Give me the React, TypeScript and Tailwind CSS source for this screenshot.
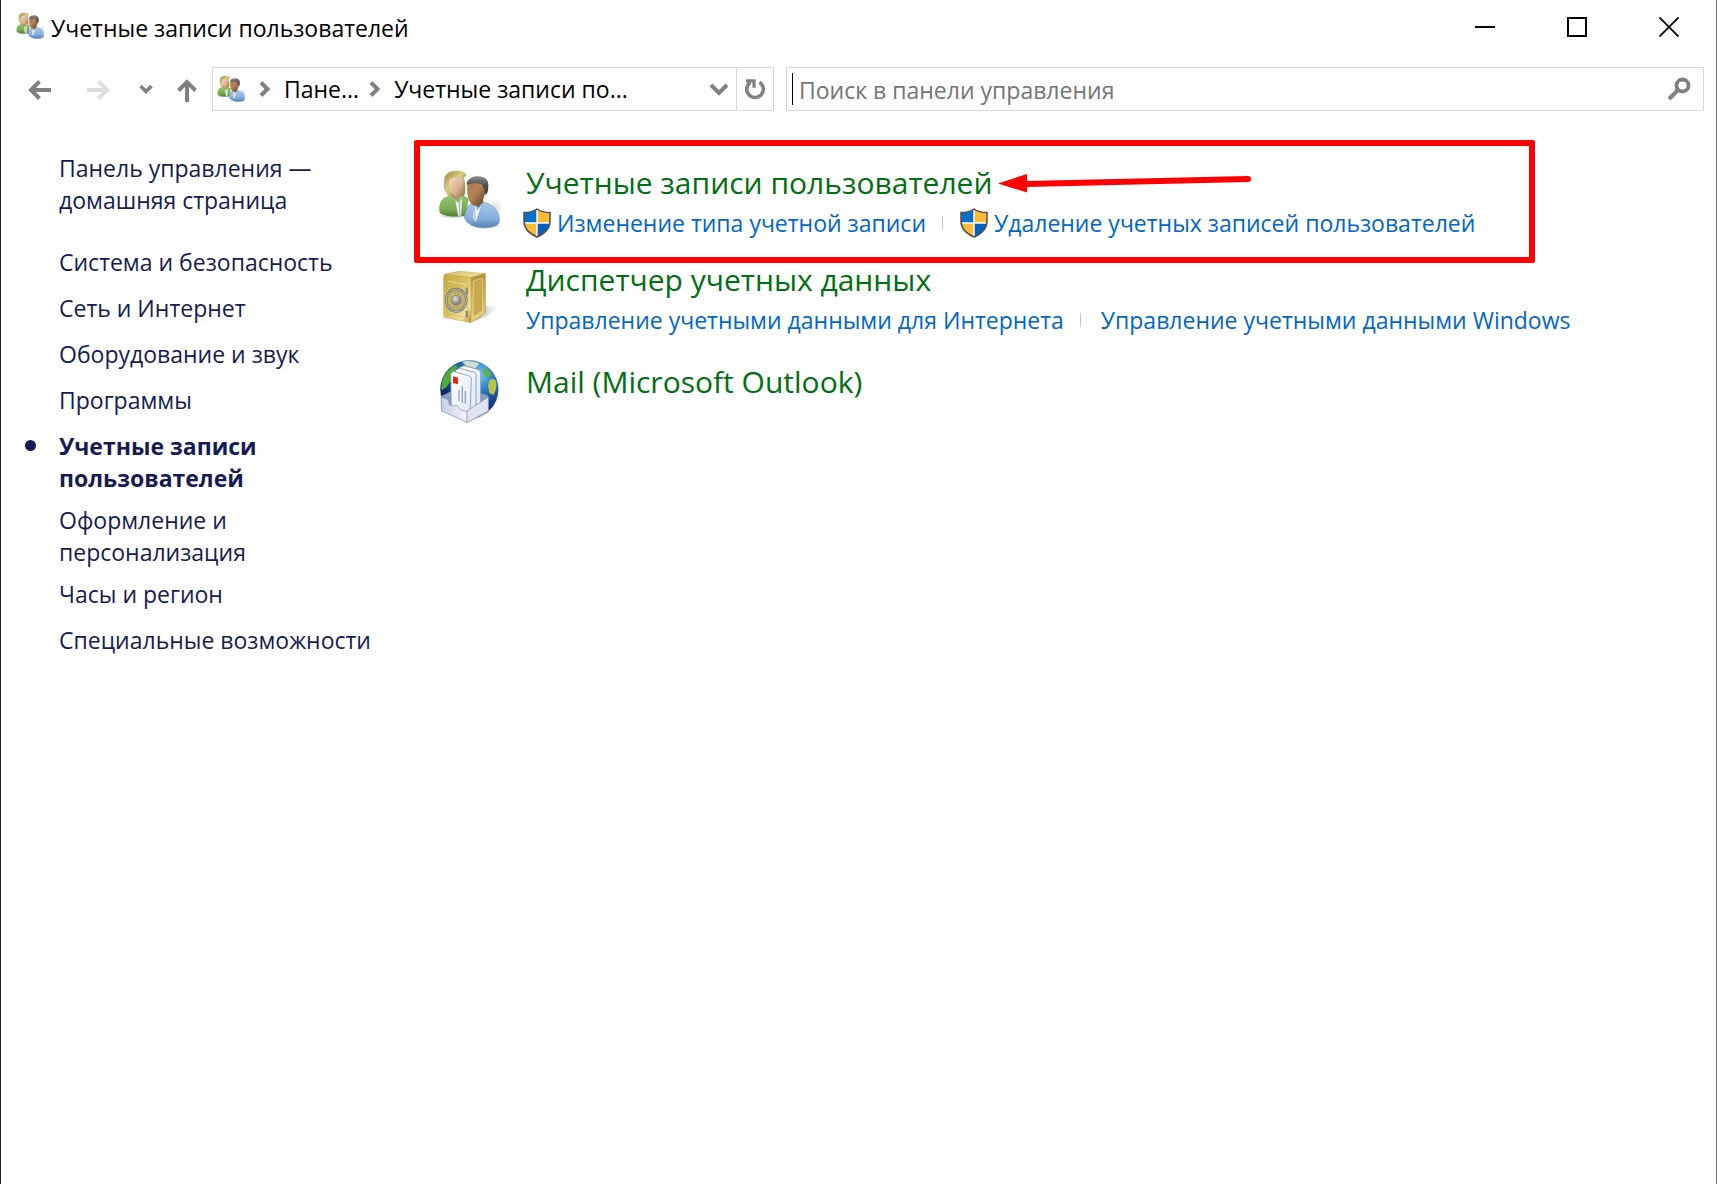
import { useId, type ReactNode } from "react";

function UsersIcon({ className }: { className: string }) {
  const id = useId().replace(/[^a-zA-Z0-9]/g, "");
  const u = (n: string) => `url(#${id}${n})`;
  return (
    <svg viewBox="24 28 192 192" className={className} aria-hidden="true">
      <defs>
        <linearGradient id={`${id}hair`} x1="0" y1="0" x2="1" y2="1">
          <stop offset="0" stopColor="#9c8a3c" />
          <stop offset=".45" stopColor="#d9ca84" />
          <stop offset="1" stopColor="#8c7432" />
        </linearGradient>
        <linearGradient id={`${id}f1`} x1="0" y1="0" x2="1" y2="1">
          <stop offset="0" stopColor="#f6dcc4" />
          <stop offset=".6" stopColor="#dcb393" />
          <stop offset="1" stopColor="#9a7358" />
        </linearGradient>
        <linearGradient id={`${id}f2`} x1="0" y1="0" x2="1" y2="1">
          <stop offset="0" stopColor="#a9784f" />
          <stop offset=".45" stopColor="#b38258" />
          <stop offset="1" stopColor="#5d3d24" />
        </linearGradient>
        <linearGradient id={`${id}g`} x1="0" y1="0" x2="0" y2="1">
          <stop offset="0" stopColor="#99c170" />
          <stop offset=".65" stopColor="#79ab50" />
          <stop offset="1" stopColor="#4f7d33" />
        </linearGradient>
        <linearGradient id={`${id}b`} x1="0" y1="0" x2="0" y2="1">
          <stop offset="0" stopColor="#a9c9ea" />
          <stop offset=".65" stopColor="#85b0de" />
          <stop offset="1" stopColor="#5381b5" />
        </linearGradient>
        <linearGradient id={`${id}k`} x1="0" y1="0" x2="0" y2="1">
          <stop offset="0" stopColor="#8d8d8d" />
          <stop offset=".5" stopColor="#4e4e4e" />
          <stop offset="1" stopColor="#3a332e" />
        </linearGradient>
        <radialGradient id={`${id}s`}>
          <stop offset="0" stopColor="#000" stopOpacity=".35" />
          <stop offset="1" stopColor="#000" stopOpacity="0" />
        </radialGradient>
      </defs>
      <ellipse cx="164" cy="198" rx="52" ry="11" fill={u("s")} />
      <ellipse cx="196" cy="148" rx="22" ry="34" fill={u("s")} opacity=".4" />
      <ellipse cx="68" cy="168" rx="46" ry="8" fill={u("s")} />
      <path d="M42 66C42 42 58 32 82 33c18 0 27 7 28 14l-8 8c4 16 6 34 2 50-4 6-10 7-16 5l-30 2C44 98 40 84 42 66Z" fill={u("hair")} />
      <path d="M66 90h26v30l-12 12-16-14Z" fill="#b98f70" />
      <path d="M28 142c2-18 10-30 32-34l20 12 16-12c8 0 16 4 20 10l-8 50c-24 4-54 4-76-6-4-4-5-12-4-20Z" fill={u("g")} />
      <path d="m76 122 10 8 10-14-2 52H84Z" fill="#e7eee9" />
      <path d="m88 128 2 40" stroke="#9eafab" strokeWidth="3" />
      <path d="M56 64c0-8 24-12 34-14 10 2 11 14 10 28-1 18-8 30-18 32-14 0-25-16-26-46Z" fill={u("f1")} />
      <path d="M46 62c2-18 16-26 34-26 14 0 24 4 28 10-14 6-36 2-50 16-4 8-4 22-2 34-8-8-12-20-10-34Z" fill={u("hair")} />
      <path d="M122 108h36l2 24-20 22-16-16Z" fill="#805634" />
      <path d="M103 174c2-22 10-38 28-46l14 16 14-17c30 6 46 24 49 48 1 12 0 17-8 22-22 10-64 10-84-6-6-4-10-10-13-17Z" fill={u("b")} stroke="#5e88b5" strokeWidth="1.5" />
      <path d="m132 132 10 22 16-24-20 58-8-12Z" fill="#f2f6fa" />
      <path d="m132 132 4 50M158 130l-20 58" stroke="#6f96c0" strokeWidth="2" fill="none" />
      <path d="M112 76c4-12 46-14 54-8 4 24-2 56-20 68-10 4-18 2-24-6-9-12-12-32-10-54Z" fill={u("f2")} />
      <path d="M110 72c2-14 16-22 34-22 22 0 32 12 31 28 0 14-2 22-8 28-3-14-5-24-13-33-14-4-26-2-43 2-1 0-2-1-1-3Z" fill={u("k")} />
    </svg>
  );
}

function SafeIcon() {
  return (
    <svg viewBox="24 28 192 192" className="size-16" aria-hidden="true">
      <defs>
        <linearGradient id="safe-front" x1="0" y1="0" x2="1" y2="1">
          <stop offset="0" stopColor="#c7a63a" />
          <stop offset=".5" stopColor="#dcc468" />
          <stop offset=".8" stopColor="#f0e29c" />
          <stop offset="1" stopColor="#b28e2a" />
        </linearGradient>
        <linearGradient id="safe-side" x1="0" y1="0" x2="0" y2="1">
          <stop offset="0" stopColor="#b3913c" />
          <stop offset=".6" stopColor="#d9be66" />
          <stop offset="1" stopColor="#ecd98e" />
        </linearGradient>
        <linearGradient id="safe-top" x1="0" y1="0" x2="1" y2="0">
          <stop offset="0" stopColor="#d9c26a" />
          <stop offset="1" stopColor="#f0df9c" />
        </linearGradient>
        <linearGradient id="safe-shadow" x1="0" y1="0" x2="1" y2="0">
          <stop offset="0" stopColor="#000" stopOpacity=".3" />
          <stop offset="1" stopColor="#000" stopOpacity="0" />
        </linearGradient>
        <radialGradient id="safe-hub" cx=".4" cy=".35">
          <stop offset="0" stopColor="#e3e3e3" />
          <stop offset="1" stopColor="#858585" />
        </radialGradient>
      </defs>
      <path d="m124 188 40-50 42 4-36 28Z" fill="url(#safe-shadow)" />
      <path d="m42 44 46-9 78 7-44 12Z" fill="url(#safe-top)" stroke="#c9b064" strokeWidth="2" />
      <path d="m122 54 44-12v118l-44 29Z" fill="url(#safe-side)" stroke="#b39444" strokeWidth="2" />
      <path d="m130 64 28-9v98l-28 18Z" fill="#c9a94c" stroke="#e8d590" strokeWidth="2" />
      <path d="M46 45l72 8q5 1 5 5v126q0 5-5 4l-72-14q-5-1-5-5V49q0-4 5-4Z" fill="url(#safe-front)" stroke="#c0a044" strokeWidth="1.5" />
      <path d="m51 62 62 11v101l-62-11Z" fill="none" stroke="#c8aa4e" strokeWidth="1.5" />
      <path d="m52 64 60 11" stroke="#f2e7ac" strokeWidth="2" />
      <rect x="107" y="84" width="7" height="20" rx="2" fill="#8f8b7c" />
      <rect x="107" y="153" width="7" height="20" rx="2" fill="#8f8b7c" />
      <ellipse cx="79" cy="122" rx="30" ry="34" fill="#cdb153" stroke="#6f6f6d" strokeWidth="7" />
      <ellipse cx="79" cy="122" rx="30" ry="34" fill="none" stroke="#c4c4c2" strokeWidth="3" />
      <path d="m52 106 54 32M54 140l50-36M72 90l14 64M90 91l-22 62" stroke="#a3a39e" strokeWidth="4" />
      <circle cx="79" cy="122" r="15" fill="url(#safe-hub)" stroke="#8c8c8a" strokeWidth="2" />
    </svg>
  );
}

function MailIcon() {
  return (
    <svg viewBox="24 28 192 192" className="size-16" aria-hidden="true">
      <defs>
        <radialGradient id="globe" cx=".65" cy=".25" r=".7">
          <stop offset="0" stopColor="#7fd0ee" />
          <stop offset=".35" stopColor="#2f83cc" />
          <stop offset=".9" stopColor="#10276f" />
        </radialGradient>
        <linearGradient id="paper" x1="0" y1="0" x2="1" y2="1">
          <stop offset="0" stopColor="#fff" />
          <stop offset="1" stopColor="#dfe7f4" />
        </linearGradient>
        <linearGradient id="tray" x1="0" y1="0" x2="1" y2="0">
          <stop offset="0" stopColor="#c5cfe2" />
          <stop offset="1" stopColor="#f4f7fc" />
        </linearGradient>
      </defs>
      <circle cx="119" cy="120" r="90" fill="#d5d8de" opacity=".5" />
      <circle cx="118" cy="119" r="87" fill="url(#globe)" />
      <path d="M36 96c6-22 22-40 40-50l8 4-10 14-8 10-6 22-10 16-14 10c-3-8-2-16 0-26Z" fill="#4cae35" />
      <path d="M96 36c20-4 38-2 52 6l-12 14-26-6Z" fill="#cfdccb" />
      <path d="m160 56 12 2 12 16-6 10-12-4-6-12Z" fill="#5fae46" />
      <path d="M178 92c6-6 16-6 20 2 4 14-1 32-8 42l-12-6-4-22Z" fill="#b8c244" />
      <path d="m33 140 60-30 82 28v50l-62 30-78-34Z" fill="#8c9cbc" />
      <path d="m88 54 14-6 46 12 4 8v100l-64-20Z" fill="url(#paper)" stroke="#8394b2" strokeWidth="2.5" />
      <path d="m76 62 12-6 46 12 4 6v108l-62-20Z" fill="url(#paper)" stroke="#8394b2" strokeWidth="2.5" />
      <path d="m62 72 8-7 48 14 6 6-4 116-56-22Z" fill="url(#paper)" stroke="#8394b2" strokeWidth="2.5" />
      <path d="m69 80 15 4v20l-15-4Z" fill="#e2290f" />
      <path d="M87 122v32M97 110v50M106 124v38" stroke="#8fa5c8" strokeWidth="4" />
      <path d="m33 142 22 8 4 16 10 4 6-4 8 2 8 12 20 6v32l-76-34Z" fill="url(#tray)" stroke="#8291b0" strokeWidth="2" />
      <path d="m111 184 64-42v42l-64 35Z" fill="#dfe6f2" stroke="#8291b0" strokeWidth="2" />
    </svg>
  );
}

function ShieldIcon() {
  return (
    <svg viewBox="0 0 28 30" className="h-[30px] w-7 shrink-0" aria-hidden="true">
      <defs>
        <clipPath id="shield-clip">
          <path d="M14 1c4 3 8 3.500 13 3.500V13c0 8-6 13-13 16C7 26 1 21 1 13V4.500C6 4.500 10 4 14 1Z" />
        </clipPath>
      </defs>
      <g clipPath="url(#shield-clip)">
        <path d="M0 0h28v30H0Z" fill="#fff" />
        <path d="M0 0h13.300v14.300H0Z" fill="#0a6fc9" />
        <path d="M14.700 0H28v14.300H14.700Z" fill="#fdbb37" />
        <path d="M0 15.700h13.300V30H0Z" fill="#fdbb37" />
        <path d="M14.700 15.700H28V30H14.700Z" fill="#075fc0" />
      </g>
      <path d="M14 1c4 3 8 3.500 13 3.500V13c0 8-6 13-13 16C7 26 1 21 1 13V4.500C6 4.500 10 4 14 1Z" fill="none" stroke="#4d4f52" strokeWidth="1.500" />
    </svg>
  );
}

function Stroke({ d, className, width = 4 }: { d: string; className: string; width?: number }) {
  return (
    <svg viewBox="0 0 24 24" className={className} fill="none" stroke="currentColor" strokeWidth={width} aria-hidden="true">
      <path d={d} />
    </svg>
  );
}

const CRUMB = "m8 5.500 6.500 6.500L8 18.500";

function TitleBar() {
  return (
    <header className="flex h-[56px] items-start pr-px">
      <div className="flex flex-1 items-start gap-[6px] pt-[12px] pl-[15px]">
        <UsersIcon className="size-[29px]" />
        <h1 className="text-[23px] leading-8 text-black">Учетные записи пользователей</h1>
      </div>
      <button aria-label="Свернуть" className="flex h-[54px] w-[92px] items-center justify-center">
        <span className="h-[2px] w-5 bg-black" />
      </button>
      <button aria-label="Развернуть" className="flex h-[54px] w-[92px] items-center justify-center">
        <span className="size-5 border-2 border-black" />
      </button>
      <button aria-label="Закрыть" className="flex h-[54px] w-[92px] items-center justify-center text-black">
        <svg viewBox="0 0 20 20" className="size-5" stroke="currentColor" strokeWidth="1.800" aria-hidden="true">
          <path d="m.5.5 19 19M19.500.5l-19 19" />
        </svg>
      </button>
    </header>
  );
}

function NavBar() {
  return (
    <div className="flex items-center pt-[11px] pr-3 text-[#808080]">
      <nav className="flex w-[211px] items-center" aria-label="Навигация">
        <button aria-label="Назад" className="ml-[27px] pt-px">
          <Stroke className="size-6" d="M23 12H3M11.500 3.500 3 12l8.500 8.500" />
        </button>
        <button aria-label="Вперед" disabled className="ml-[34px] pt-px text-[#dedede]">
          <Stroke className="size-6" d="M1 12h20M12.500 3.500 21 12l-8.500 8.500" />
        </button>
        <button aria-label="Последние расположения" className="ml-[24px]">
          <Stroke className="size-6" width={3.5} d="m6.500 9 5.500 5.500L17.500 9" />
        </button>
        <button aria-label="Вверх" className="ml-[17px] pt-1">
          <Stroke className="size-6" d="M12 23V3M3.500 11.500 12 3l8.500 8.500" />
        </button>
      </nav>
      <div className="flex h-11 w-[562px] border border-[#d9d9d9] text-[23px] text-black">
        <div className="flex flex-1 items-center pl-1">
          <UsersIcon className="size-[29px]" />
          <Stroke className="ml-[7px] size-6 text-[#808080]" d={CRUMB} />
          <button className="ml-[7px]">Пане...</button>
          <Stroke className="ml-[4px] size-6 text-[#808080]" d={CRUMB} />
          <button className="ml-[7px]">Учетные записи по...</button>
          <button aria-label="Предыдущие расположения" className="mr-[5px] ml-auto text-[#808080]">
            <Stroke className="size-6" d="m4 8 8 8 8-8" />
          </button>
        </div>
        <button aria-label="Обновить" className="flex w-[37px] items-center justify-center border-l border-[#d9d9d9] text-[#808080]">
          <svg viewBox="0 0 24 24" className="size-6" fill="none" stroke="currentColor" strokeWidth="3.500" aria-hidden="true">
            <path d="M16.500 5.200a8.300 8.300 0 1 1-9 0" />
            <path d="M3 3.800h8v7" strokeWidth="3.200" />
          </svg>
        </button>
      </div>
      <label className="ml-3 flex h-11 flex-1 items-center border border-[#d9d9d9] pr-[12px] pl-[5px]">
        <span className="h-8 w-px bg-black" />
        <input
          type="text"
          aria-label="Поиск в панели управления"
          placeholder="Поиск в панели управления"
          className="ml-[6px] min-w-0 flex-1 pt-[2px] text-[23px] outline-none placeholder:text-[#757575]"
        />
        <svg viewBox="0 0 24 24" className="size-6" fill="none" stroke="currentColor" aria-hidden="true">
          <circle cx="15.500" cy="8.500" r="6" strokeWidth="3.800" />
          <path d="m11.500 12.500-9.500 9.500" strokeWidth="4" />
        </svg>
      </label>
    </div>
  );
}

const CATEGORIES = [
  { label: "Система и безопасность" },
  { label: "Сеть и Интернет" },
  { label: "Оборудование и звук" },
  { label: "Программы" },
  { label: "Учетные записи пользователей", active: true },
  { label: "Оформление и персонализация" },
  { label: "Часы и регион" },
  { label: "Специальные возможности" },
];

function Sidebar() {
  return (
    <aside className="w-[413px] shrink-0 pt-[12px] pl-6 text-[23px] leading-8 text-[#151c55]">
      <a href="#home" className="ml-[34px] block w-[270px]">
        Панель управления — домашняя страница
      </a>
      <ul className="mt-[30px] flex flex-col gap-[10px]">
        {CATEGORIES.map((c) => (
          <li key={c.label} className="flex min-h-9 items-start">
            <span className={c.active ? "mt-[10px] mr-[23px] size-[11px] shrink-0 rounded-full bg-[#151c55]" : "mr-[34px]"} />
            <a
              href="#category"
              aria-current={c.active ? "page" : undefined}
              className={c.active ? "w-[240px] font-bold" : c.label.startsWith("Оформление") ? "w-[240px]" : "whitespace-nowrap"}
            >
              {c.label}
            </a>
          </li>
        ))}
      </ul>
    </aside>
  );
}

function Entry({ icon, title, children }: { icon: ReactNode; title: ReactNode; children?: ReactNode }) {
  return (
    <div className="flex items-start gap-6">
      {icon}
      <div>
        <h2 className="flex items-center text-[30px] leading-10 whitespace-nowrap text-[#007012]">{title}</h2>
        {children && (
          <div className="flex h-10 items-center text-[23px] whitespace-nowrap text-[#0066cc]">{children}</div>
        )}
      </div>
    </div>
  );
}

function Divider() {
  return <span className="mr-5 ml-4 h-[14px] w-px bg-[#c9c9c9]" />;
}

function TaskLink({ children, shield }: { children: string; shield?: boolean }) {
  return (
    <a href="#task" className={shield ? "-ml-[3px] flex items-center gap-[6px]" : "flex items-center"}>
      {shield && <ShieldIcon />}
      {children}
    </a>
  );
}

export default function App() {
  return (
    <div className="flex min-h-screen flex-col border-r border-l border-r-[#6b6b6b] border-l-[#222] bg-white font-['Open_Sans','Noto_Sans',sans-serif]">
      <TitleBar />
      <NavBar />
      <div className="flex flex-1 pt-[29px]">
        <Sidebar />
        <main className="min-w-0 flex-1">
          <section className="mr-[181px] h-[123px] rounded-[2px] border-[6px] border-[#fe0000] pt-[17px] pl-[18px]">
            <Entry
              icon={<UsersIcon className="mt-[6px] size-16" />}
              title={
                <>
                  <a href="#accounts">Учетные записи пользователей</a>
                  <svg viewBox="0 0 254 20" className="ml-[6px] h-5 w-[254px]" aria-hidden="true">
                    <path d="M28 11 250 6" stroke="#fe0000" strokeWidth="6" strokeLinecap="round" />
                    <path d="M0 10.500 29 1v18.500Z" fill="#fe0000" />
                  </svg>
                </>
              }
            >
              <TaskLink shield>Изменение типа учетной записи</TaskLink>
              <Divider />
              <TaskLink shield>Удаление учетных записей пользователей</TaskLink>
            </Entry>
          </section>
          <section className="-mt-[3px] pl-6">
            <Entry icon={<div className="pt-[9px]"><SafeIcon /></div>} title={<a href="#credentials">Диспетчер учетных данных</a>}>
              <TaskLink>Управление учетными данными для Интернета</TaskLink>
              <Divider />
              <TaskLink>Управление учетными данными Windows</TaskLink>
            </Entry>
          </section>
          <section className="mt-[19px] pl-6">
            <Entry icon={<MailIcon />} title={<a href="#mail" className="pt-[3px]">Mail (Microsoft Outlook)</a>} />
          </section>
        </main>
      </div>
    </div>
  );
}
